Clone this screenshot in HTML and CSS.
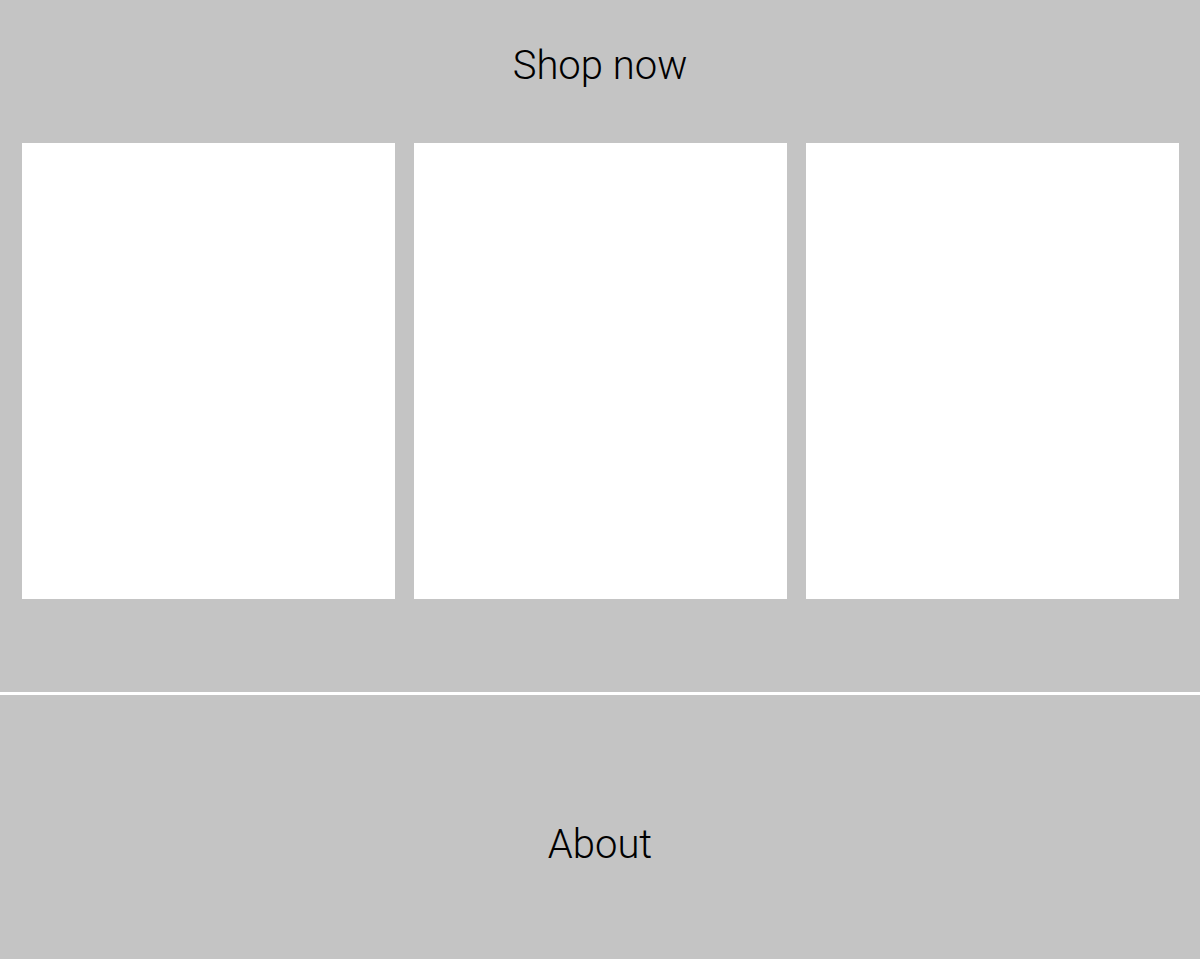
FILE: index.html
```html
<!DOCTYPE html>
<html>
<head>
<meta charset="utf-8">
<link rel="stylesheet" href="styles.css">
</head>
<body>
<section class="shop">
  <h1 class="title">Shop now</h1>
  <div class="cards">
    <div class="card"></div>
    <div class="card"></div>
    <div class="card"></div>
  </div>
</section>
<section class="about">
  <h2 class="title">About</h2>
</section>
</body>
</html>
```
FILE: styles.css
```css
html, body {
  margin: 0;
  padding: 0;
  background: #ffffff;
}
body {
  font-family: Roboto, "Liberation Sans", sans-serif;
  color: #000000;
}
.title {
  margin: 0;
  font-size: 40px;
  font-weight: 300;
  line-height: 47px;
  text-align: center;
}
.shop {
  background: #c4c4c4;
  padding: 42px 0 93px;
  border-bottom: 3px solid #ffffff;
}
.cards {
  margin-top: 54px;
  display: grid;
  grid-template-columns: repeat(3, 373px);
  column-gap: 19px;
  padding-left: 22px;
}
.card {
  height: 456px;
  background: #ffffff;
}
.about {
  background: #c4c4c4;
  padding: 126px 0 140px;
}
```
